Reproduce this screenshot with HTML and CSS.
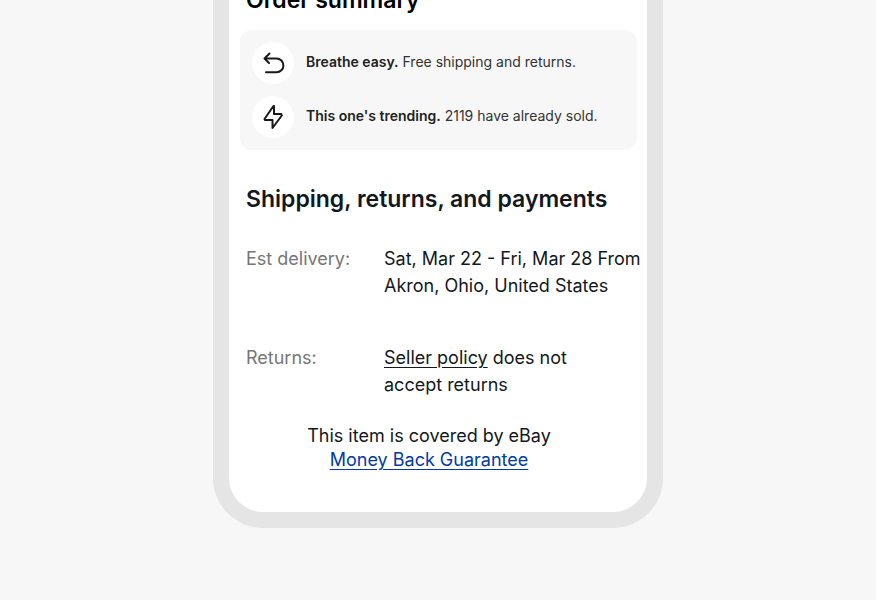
FILE: index.html
```html
<!DOCTYPE html>
<html lang="en">
<head>
    <meta charset="UTF-8">
    <meta name="viewport" content="width=device-width, initial-scale=1.0">
    <title>Order summary</title>
    <link rel="stylesheet" href="styles.css">
</head>
<body>
    <main class="phone">
        <h2 class="summary-title">Order summary</h2>

        <ul class="highlights">
            <li>
                <span class="icon">
                    <svg width="24" height="24" viewBox="0 0 24 24" aria-hidden="true">
                        <path d="M8.5 2.5L3.5 7.5L8 12M3.5 7.5H15.5a6.9 6.9 0 0 1 0 13.8H5"/>
                    </svg>
                </span>
                <p><strong>Breathe easy.</strong> Free shipping and returns.</p>
            </li>
            <li>
                <span class="icon">
                    <svg width="24" height="24" viewBox="0 0 24 24" aria-hidden="true">
                        <path d="M12.500 1L3.500 14L4 15H11.500V23L20.800 10.500L20.300 9H13V1z"/>
                    </svg>
                </span>
                <p><strong>This one's trending.</strong> 2119 have already sold.</p>
            </li>
        </ul>

        <section class="shipping">
            <h2>Shipping, returns, and payments</h2>
            <dl>
                <dt>Est delivery:</dt>
                <dd>Sat, Mar 22 - Fri, Mar 28 From<br>Akron, Ohio, United States</dd>
                <dt>Returns:</dt>
                <dd><a href="#">Seller policy</a> does not<br>accept returns</dd>
            </dl>
            <p class="guarantee">This item is covered by eBay<br><a href="#">Money Back Guarantee</a></p>
        </section>
    </main>
</body>
</html>
```
FILE: styles.css
```css
* {
    box-sizing: border-box;
}

body {
    margin: 0;
    background: #f7f7f7;
    color: #111820;
    font-family: Inter, "Liberation Sans", sans-serif;
    font-size: 18px;
    display: flow-root;
}

h2, p, ul, dl, dd {
    margin: 0;
    padding: 0;
}

.phone {
    max-width: 450px;
    margin: -16px auto 72px;
    padding-bottom: 40px;
    background: #fff;
    border: 16px solid #e5e5e5;
    border-top: 0;
    border-radius: 0 0 50px 50px;
}

h2 {
    font-size: 23px;
    line-height: 32px;
    font-weight: 600;
}

.summary-title {
    padding: 0 17px;
    color: #000;
}

/* grey card with the two icon rows */
.highlights {
    list-style: none;
    margin: 14px 10px 0 11px;
    padding: 12px;
    background: #f7f7f7;
    border-radius: 12px;
    display: grid;
    gap: 12px;
}

.highlights li {
    display: flex;
    align-items: center;
    gap: 12px;
    color: #333;
    font-size: 14px;
}

.highlights p {
    padding-bottom: 3px;
}

.highlights strong {
    color: #222;
    font-weight: 600;
}

.icon {
    width: 42px;
    height: 42px;
    border-radius: 50%;
    background: #fff;
    display: flex;
    align-items: center;
    justify-content: center;
}

.icon svg {
    fill: none;
    stroke: #191919;
    stroke-width: 2;
    stroke-linecap: round;
    stroke-linejoin: round;
}

.shipping {
    padding: 33px 17px 0;
}

.shipping dl {
    display: grid;
    grid-template-columns: 138px 1fr;
    row-gap: 45px;
    margin-top: 30px;
    line-height: 27px;
    white-space: nowrap;
}

.shipping dt {
    color: #767676;
}

.shipping dd a {
    color: #111820;
}

.guarantee {
    margin-top: 26px;
    padding-right: 18px;
    line-height: 24px;
    text-align: center;
}

.guarantee a {
    color: #003aa5;
}

a {
    text-underline-offset: 3px;
}
```
